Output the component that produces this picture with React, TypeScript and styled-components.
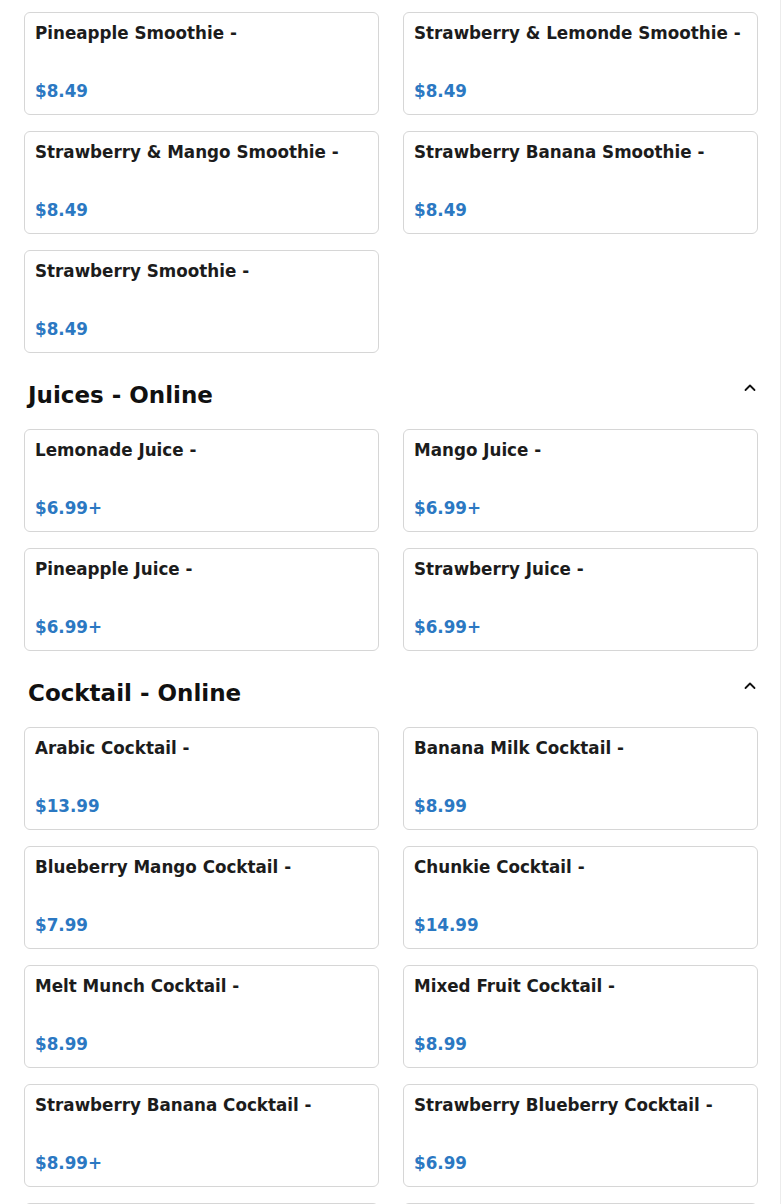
import React from 'react';
import styled, { createGlobalStyle } from 'styled-components';

interface Item {
  name: string;
  price: string;
}

interface Section {
  title?: string;
  items: Item[];
}

const sections: Section[] = [
  {
    items: [
      { name: 'Pineapple Smoothie -', price: '$8.49' },
      { name: 'Strawberry & Lemonde Smoothie -', price: '$8.49' },
      { name: 'Strawberry & Mango Smoothie -', price: '$8.49' },
      { name: 'Strawberry Banana Smoothie -', price: '$8.49' },
      { name: 'Strawberry Smoothie -', price: '$8.49' },
    ],
  },
  {
    title: 'Juices - Online',
    items: [
      { name: 'Lemonade Juice -', price: '$6.99+' },
      { name: 'Mango Juice -', price: '$6.99+' },
      { name: 'Pineapple Juice -', price: '$6.99+' },
      { name: 'Strawberry Juice -', price: '$6.99+' },
    ],
  },
  {
    title: 'Cocktail - Online',
    items: [
      { name: 'Arabic Cocktail -', price: '$13.99' },
      { name: 'Banana Milk Cocktail -', price: '$8.99' },
      { name: 'Blueberry Mango Cocktail -', price: '$7.99' },
      { name: 'Chunkie Cocktail -', price: '$14.99' },
      { name: 'Melt Munch Cocktail -', price: '$8.99' },
      { name: 'Mixed Fruit Cocktail -', price: '$8.99' },
      { name: 'Strawberry Banana Cocktail -', price: '$8.99+' },
      { name: 'Strawberry Blueberry Cocktail -', price: '$6.99' },
      { name: 'Strawberry Mango Cocktail -', price: '$8.99' },
      { name: 'Tropical Cocktail -', price: '$8.99' },
    ],
  },
];

function ChevronUp() {
  return (
    <svg width="14" height="14" viewBox="0 0 14 14" fill="none">
      <path d="M2.5 9 L7 4.5 L11.5 9" stroke="#111" strokeWidth="1.8" strokeLinecap="round" strokeLinejoin="round" />
    </svg>
  );
}

function App() {
  return (
    <>
      <GlobalStyle />
      <Styled.Page>
        {sections.map((section, index) => (
          <React.Fragment key={index}>
            {section.title && (
              <Styled.SectionHeader>
                <Styled.SectionTitle>{section.title}</Styled.SectionTitle>
                <Styled.ToggleButton aria-label="collapse">
                  <ChevronUp />
                </Styled.ToggleButton>
              </Styled.SectionHeader>
            )}
            <Styled.Grid>
              {section.items.map((item) => (
                <Styled.Card key={item.name}>
                  <Styled.ItemName>{item.name}</Styled.ItemName>
                  <Styled.Price>{item.price}</Styled.Price>
                </Styled.Card>
              ))}
            </Styled.Grid>
          </React.Fragment>
        ))}
      </Styled.Page>
    </>
  );
}

export default App;

const GlobalStyle = createGlobalStyle`
  html, body {
    margin: 0;
    padding: 0;
    background: #fff;
    font-family: "DejaVu Sans", "Liberation Sans", sans-serif;
    overflow: hidden;
  }
`;

const Styled = {
  Page: styled.div`
    box-sizing: border-box;
    width: 781px;
    height: 1204px;
    overflow: hidden;
    padding: 12px 23px 0 24px;
    border-right: 1px solid #ececec;
  `,
  Grid: styled.div`
    display: grid;
    grid-template-columns: repeat(2, 355px);
    column-gap: 24px;
    row-gap: 16px;
  `,
  Card: styled.div`
    box-sizing: border-box;
    height: 103px;
    display: flex;
    flex-direction: column;
    justify-content: space-between;
    padding: 10px 10px 12px;
    border: 1px solid #d6d6d6;
    border-radius: 6px;
    background: #fff;
  `,
  ItemName: styled.div`
    font-size: 16.75px;
    font-weight: 700;
    line-height: 21px;
    color: #1c1c1c;
  `,
  Price: styled.div`
    font-size: 16.75px;
    font-weight: 700;
    line-height: 21px;
    color: #2b78c2;
  `,
  SectionHeader: styled.div`
    display: flex;
    justify-content: space-between;
    align-items: flex-start;
    margin: 29px 0 21px;
    padding-left: 4px;
  `,
  SectionTitle: styled.h2`
    margin: 0;
    font-size: 23px;
    font-weight: 700;
    line-height: 26px;
    color: #111;
  `,
  ToggleButton: styled.button`
    display: flex;
    align-items: center;
    justify-content: center;
    width: 14px;
    height: 14px;
    margin-top: -1px;
    padding: 0;
    border: 0;
    background: transparent;
    cursor: pointer;
  `,
};
